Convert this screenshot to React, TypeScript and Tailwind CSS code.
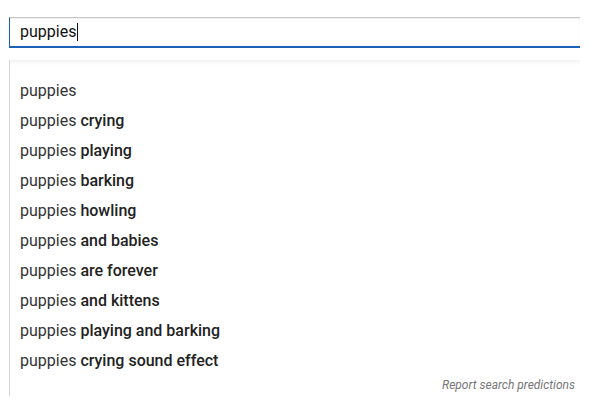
import React from "react";

const items: [string, string][] = [
  ["puppies", ""],
  ["puppies", "crying"],
  ["puppies", "playing"],
  ["puppies", "barking"],
  ["puppies", "howling"],
  ["puppies", "and babies"],
  ["puppies", "are forever"],
  ["puppies", "and kittens"],
  ["puppies", "playing and barking"],
  ["puppies", "crying sound effect"],
];

export default function App() {
  return (
    <div
      className="w-[591px] h-[408px] bg-white overflow-hidden"
      style={{ fontFamily: "Roboto, 'Liberation Sans', Arial, sans-serif" }}
    >
      <div className="pt-[17px] pl-[9px] pr-[11px]">
        <div className="h-[31px] border-t border-t-[#c6c6c6] border-l border-l-[#1c62b9] border-b-2 border-b-[#1c62b9] shadow-[inset_0_1px_2px_#eeeeee] flex items-center pl-[10px]">
          <span className="text-[16px] text-[#111] leading-none">puppies</span>
          <span className="w-px h-[18px] bg-[#111] ml-[1px]" />
        </div>
        <div className="mt-[12px] h-[336px] border-l border-l-[#d4d4d4] relative flex flex-col">
          <div className="absolute left-0 right-0 top-0 h-[5px] bg-gradient-to-b from-[#f2f2f2] to-white" />
          <div className="pt-[16px] flex flex-col">
            {items.map(([a, b], i) => (
              <div
                key={i}
                className="h-[30px] flex items-center pl-[10px] text-[16px] text-[#333] whitespace-pre"
              >
                <span>{a}</span>
                {b && (
                  <span className="font-medium text-[#222]">{" " + b}</span>
                )}
              </div>
            ))}
          </div>
          <div className="flex justify-end pr-[5px]">
            <span className="text-[12px] italic text-[#767676]">
              Report search predictions
            </span>
          </div>
        </div>
      </div>
    </div>
  );
}
